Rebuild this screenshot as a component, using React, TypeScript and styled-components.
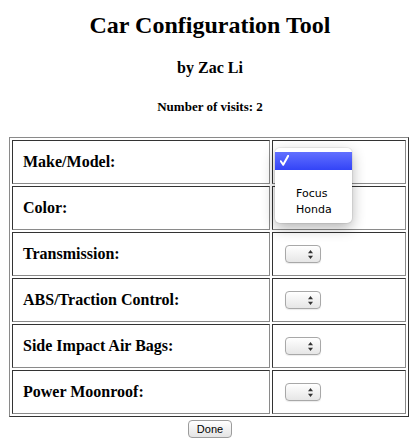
import React from 'react'
import styled, { createGlobalStyle } from 'styled-components'

const GlobalStyle = createGlobalStyle`
  body {
    margin: 8px;
    background: #fff;
    color: #000;
    font-family: "Liberation Serif", "Times New Roman", serif;
  }
`

const Page = styled.div`
  display: flex;
  flex-direction: column;
  align-items: center;
`

const Heading = styled.div<{ size: number; top: number }>`
  font-size: ${props => props.size}px;
  font-weight: bold;
  line-height: ${props => Math.round(props.size * 1.15)}px;
  margin-top: ${props => props.top}px;
  text-align: center;
`

const Table = styled.table`
  align-self: flex-start;
  margin: 23px 0 0 1px;
  width: 400px;
  border-collapse: separate;
  border-spacing: 2px;
  border: 1px solid;
  border-color: #8a8a8a #333 #333 #8a8a8a;
  box-sizing: border-box;
`

const Cell = styled.td<{ label?: boolean }>`
  position: relative;
  height: 42px;
  padding: 0 10px;
  width: ${props => props.label ? '236px' : 'auto'};
  border: 1px solid;
  border-color: #333 #8a8a8a #8a8a8a #333;
  vertical-align: middle;
  font-size: 16px;
  font-weight: bold;
`

const SelectBox = styled.div`
  box-sizing: border-box;
  width: 36px;
  height: 18px;
  margin-left: 2px;
  border: 1px solid #a8a8a8;
  border-radius: 4px;
  background: linear-gradient(#ffffff, #f2f2f2 50%, #e6e6e6);
  box-shadow: 0 1px 1px rgba(0, 0, 0, 0.08);
  display: flex;
  align-items: center;
  justify-content: flex-end;
  padding-right: 7px;
`

const Popup = styled.div`
  position: absolute;
  left: 2px;
  top: 7px;
  width: 77px;
  padding: 4px 0 5px;
  background: #fff;
  border-radius: 5px;
  box-shadow: 0 0 0 1px rgba(0, 0, 0, 0.06), 0 5px 14px rgba(0, 0, 0, 0.3);
  font-family: "DejaVu Sans", "Lucida Grande", sans-serif;
  font-size: 11px;
  font-weight: normal;
  z-index: 2;
`

const Option = styled.div<{ active?: boolean }>`
  height: ${props => props.active ? 18 : 16}px;
  line-height: ${props => props.active ? 18 : 16}px;
  padding-left: 21px;
  position: relative;
  color: ${props => props.active ? '#fff' : '#000'};
  background: ${props => props.active ? 'linear-gradient(#6270ff, #3344f7)' : 'transparent'};
`

const Check = styled.svg`
  position: absolute;
  left: 5px;
  top: 3px;
`

const DoneButton = styled.button`
  margin-top: 3px;
  width: 44px;
  height: 18px;
  padding: 0;
  border: 1px solid #9c9c9c;
  border-radius: 4px;
  background: linear-gradient(#ffffff, #f0f0f0 55%, #e4e4e4);
  font-family: "Liberation Sans", "Lucida Grande", sans-serif;
  font-size: 11px;
  color: #000;
`

const Arrows = () => (
  <svg width="5" height="9" viewBox="0 0 5 9">
    <path d="M2.5 0 L5 3.3 H0 Z" fill="#333" />
    <path d="M2.5 9 L5 5.7 H0 Z" fill="#333" />
  </svg>
)

const rows = [
  'Color:',
  'Transmission:',
  'ABS/Traction Control:',
  'Side Impact Air Bags:',
  'Power Moonroof:',
]

const App: React.FC = () => {
  return (
    <Page>
      <GlobalStyle />
      <Heading size={24} top={3}>Car Configuration Tool</Heading>
      <Heading size={16} top={20}>by Zac Li</Heading>
      <Heading size={13} top={22}>Number of visits: 2</Heading>
      <Table>
        <tbody>
          <tr>
            <Cell label>Make/Model:</Cell>
            <Cell>
              <Popup>
                <Option active>
                  <Check width="9" height="11" viewBox="0 0 9 11">
                    <path d="M0.8 6.2 L3.2 9.8 L8.2 0.8" stroke="#fff" strokeWidth="2" fill="none" strokeLinecap="round" strokeLinejoin="round" />
                  </Check>
                </Option>
                <Option />
                <Option>Focus</Option>
                <Option>Honda</Option>
              </Popup>
            </Cell>
          </tr>
          {rows.map((r, i) => (
            <tr key={i}>
              <Cell label>{r}</Cell>
              <Cell>
                {i > 0 && <SelectBox><Arrows /></SelectBox>}
              </Cell>
            </tr>
          ))}
        </tbody>
      </Table>
      <DoneButton>Done</DoneButton>
    </Page>
  )
}

export default App
